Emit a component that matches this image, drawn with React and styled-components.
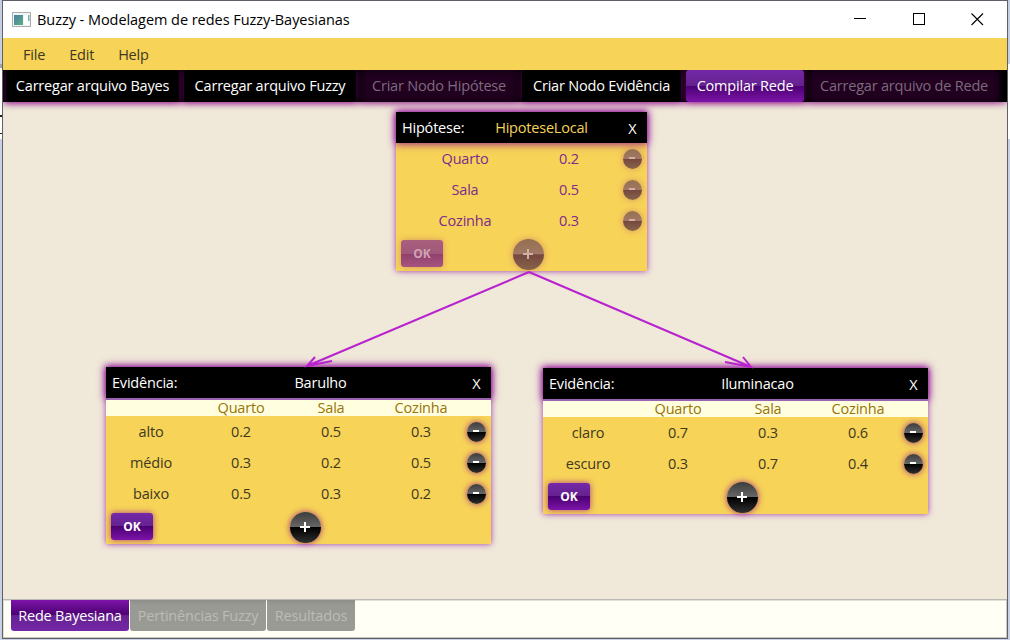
import React from "react";
import styled, { createGlobalStyle, css } from "styled-components";

const GlobalStyle = createGlobalStyle`
  * { box-sizing: border-box; }
  body { margin: 0; overflow: hidden; font-family: "Open Sans", "Noto Sans", sans-serif; }
  button { font: inherit; border: 0; margin: 0; padding: 0; }
`;

const Desktop = styled.div`
  display: flex;
  width: 1010px;
  height: 640px;
  padding: 0 2px 1px;
  background: linear-gradient(#c5cfe2 64px, #a2a5ac 64px, #a2a5ac 68px, #fff 68px, #fff 115px, #222 115px, #222 117px, #fff 117px, #fff 133px, #222 133px, #222 134px, #fff 134px, #fff 139px, #c8d2e4 139px) 0 0 / 2px 100% no-repeat,
    linear-gradient(#c5cfe2 64px, #fff 64px, #fff 139px, #c8d2e4 139px);
  font-size: 14.5px;
  line-height: 20px;
`;

const Window = styled.div`
  display: flex;
  flex-direction: column;
  width: 1006px;
  height: 639px;
  border: 1px solid #5d6167;
  background: #f0e8d9;
`;

const Label = styled.span`
  display: inline-block;
  white-space: nowrap;
  letter-spacing: ${(p) => p.$track ?? -0.2}px;
`;

const TitleBar = styled.header`
  display: flex;
  align-items: center;
  height: 37px;
  flex: none;
  padding: 0 23px 0 9px;
  background: #fff;
  color: #000;
`;

const AppIcon = styled.svg`
  margin-right: 6px;
`;

const WindowControls = styled.div`
  display: flex;
  gap: 45.5px;
  margin-left: auto;
`;

const MenuBar = styled.nav`
  display: flex;
  align-items: center;
  gap: 24px;
  height: 32px;
  flex: none;
  padding: 2px 20px 0;
  background: #f7d358;
  color: #3d3723;
`;

const ToolBar = styled.div`
  position: relative;
  z-index: 2;
  display: flex;
  gap: 5px;
  height: 32px;
  flex: none;
  padding-left: 3px;
  background: #000;
  box-shadow: 0 1px 7px rgba(140, 0, 140, 0.8);
  clip-path: inset(0 0 -12px 0);
`;

const purpleGloss = "linear-gradient(#7428a8 0%, #64218e 50%, #4b0072 50%, #7d14a8 100%)";

const ToolButton = styled.button`
  width: ${(p) => p.$w}px;
  height: 32px;
  border-radius: 3px;
  background: #000;
  color: #fff;
  box-shadow: 0 0 7px rgba(140, 0, 135, 0.65);
  ${(p) => p.$primary && css`background: ${purpleGloss};`}
  ${(p) =>
    p.disabled &&
    css`
      background: #210020;
      color: #7d6a7d;
      box-shadow: inset 0 0 7px #0b000b, 0 0 7px rgba(100, 0, 95, 0.35);
    `}
`;

const Canvas = styled.main`
  position: relative;
  height: 497px;
  flex: none;
`;

const Links = styled.svg`
  position: absolute;
  inset: 0;
  z-index: 1;
`;

const Node = styled.section`
  position: absolute;
  left: ${(p) => p.$x}px;
  top: ${(p) => p.$y}px;
  width: ${(p) => p.$w}px;
  background: #f7d358;
  color: #40391f;
  box-shadow: 0 0 6px rgba(150, 40, 165, 0.9);
`;

const NodeHeader = styled.div`
  display: grid;
  grid-template-columns: ${(p) => p.$cols};
  align-items: center;
  justify-items: center;
  height: 31px;
  background: #000;
  color: #fff;
  box-shadow: 0 0 8px 1px rgba(140, 0, 145, 0.85);
`;

const Kind = styled.div`
  justify-self: start;
  padding-left: 6px;
`;

const NodeTitle = styled.div`
  color: ${(p) => (p.$gold ? "#f7d358" : "#fff")};
`;

const CloseMark = styled.div`
  padding-top: 3px;
`;

const ColumnHeads = styled.div`
  position: relative;
  display: grid;
  grid-template-columns: 90px 90px 90px 90px 1fr;
  justify-items: center;
  align-items: center;
  height: 18px;
  border-top: 2px solid #9b62b2;
  background: #ffffdf;
  color: #987408;
  line-height: 14px;
`;

const Row = styled.div`
  display: grid;
  grid-template-columns: ${(p) => p.$cols};
  align-items: center;
  justify-items: center;
  height: 31px;
  color: ${(p) => (p.$purple ? "#7c2b8c" : "inherit")};
`;

const RoundButton = styled.button`
  display: flex;
  align-items: center;
  justify-content: center;
  width: ${(p) => p.$size}px;
  height: ${(p) => p.$size + (p.$size < 25 ? 1 : 0)}px;
  padding: 0 1px 1px 0;
  border-radius: 50%;
  background: linear-gradient(#3c3c3c 0%, #666 48%, #000 50%, #303030 100%);
  color: #fff;
  box-shadow: 0 0 6px rgba(140, 0, 140, 0.8);
  ${(p) =>
    p.disabled &&
    css`
      background: linear-gradient(#94704f 0%, #a27864 48%, #75483f 51%, #87644a 100%);
      color: #cfb0a5;
      box-shadow: 0 0 6px rgba(170, 60, 110, 0.45);
    `}
`;

const NodeFooter = styled.div`
  display: flex;
  align-items: flex-start;
  height: ${(p) => p.$h}px;
  padding: ${(p) => p.$h - 32}px 0 0 5px;
`;

const OkButton = styled.button`
  width: 42px;
  height: 27px;
  margin: 1px ${(p) => p.$gap}px 0 0;
  border-radius: 3px;
  background: ${purpleGloss};
  color: #fff;
  font-size: 12px;
  font-weight: 700;
  box-shadow: 0 0 6px rgba(140, 0, 140, 0.7);
  ${(p) =>
    p.disabled &&
    css`
      background: linear-gradient(#a95f7d 0%, #a0587a 50%, #903f6c 50%, #a5557f 100%);
      color: #d0a3b4;
      box-shadow: 0 0 6px rgba(170, 60, 110, 0.4);
    `}
`;

const TabBar = styled.footer`
  display: flex;
  gap: 1px;
  flex: 1;
  padding-left: 8px;
  border: solid #b9b9b1;
  border-width: 1px 0 0;
  background: #fffff6;
  box-shadow: inset -1px -1px 0 #c8c8c0, inset 1px 1px 0 #e0e0d7;
`;

const Tab = styled.button`
  width: ${(p) => p.$w}px;
  height: 31px;
  border-radius: 0 0 3px 3px;
  background: ${(p) =>
    p.$active
      ? "linear-gradient(#7d14a8 0%, #4b0072 49%, #64218e 49%, #7428a8 100%)"
      : "linear-gradient(#8d8e89, #999a94 5px)"};
  color: ${(p) => (p.$active ? "#fff" : "#bcbcb6")};
`;

const tools = [
  { text: "Carregar arquivo Bayes", w: 173 },
  { text: "Carregar arquivo Fuzzy", w: 172 },
  { text: "Criar Nodo Hipótese", w: 156, disabled: true },
  { text: "Criar Nodo Evidência", w: 159 },
  { text: "Compilar Rede", w: 118, primary: true },
  { text: "Carregar arquivo de Rede", w: 190, disabled: true },
];

const evidences = [
  {
    title: "Barulho", x: 103, y: 265,
    rows: [["alto", "0.2", "0.5", "0.3"], ["médio", "0.3", "0.2", "0.5"], ["baixo", "0.5", "0.3", "0.2"]],
  },
  {
    title: "Iluminacao", x: 540, y: 266,
    rows: [["claro", "0.7", "0.3", "0.6"], ["escuro", "0.3", "0.7", "0.4"]],
  },
];

const EVIDENCE_COLS = "90px 90px 90px 90px 20px";
const HYPOTHESIS_COLS = "138px 70px 56px";

function RoundIcon({ size, plus, disabled }) {
  return (
    <RoundButton $size={size} disabled={disabled}>
      <svg width="10" height="10" viewBox="0 0 10 10" stroke="currentColor" strokeWidth="2">
        <path d={plus ? "M0 5H10M5 0V10" : "M2 5H8"} />
      </svg>
    </RoundButton>
  );
}

function Evidence({ title, x, y, rows }) {
  return (
    <Node $x={x} $y={y} $w={385}>
      <NodeHeader $cols="90px 249px 63px">
        <Kind><Label>Evidência:</Label></Kind>
        <NodeTitle><Label>{title}</Label></NodeTitle>
        <CloseMark>X</CloseMark>
      </NodeHeader>
      <ColumnHeads>
        <span />
        <Label>Quarto</Label>
        <Label>Sala</Label>
        <Label>Cozinha</Label>
      </ColumnHeads>
      {rows.map((row) => (
        <Row key={row[0]} $cols={EVIDENCE_COLS}>
          {row.map((cell, i) => <Label key={i}>{cell}</Label>)}
          <RoundIcon size={19} />
        </Row>
      ))}
      <NodeFooter $h={35}>
        <OkButton $gap={137}>OK</OkButton>
        <RoundIcon size={31} plus />
      </NodeFooter>
    </Node>
  );
}

export default function App() {
  return (
    <Desktop>
      <GlobalStyle />
      <Window>
        <TitleBar>
          <AppIcon width="19" height="15" viewBox="0 0 19 15">
            <defs>
              <linearGradient id="screen" x1="0" y1="0" x2="1" y2="1">
                <stop offset="0" stopColor="#4a7fa8" />
                <stop offset="1" stopColor="#5cae82" />
              </linearGradient>
            </defs>
            <rect x=".5" y=".5" width="18" height="14" fill="#f4f5f5" stroke="#a9adb1" />
            <rect x="2" y="3" width="9" height="10" fill="url(#screen)" />
            <rect x="12" y="3" width="5" height="10" fill="#fff" />
            <rect x="16" y="3" width="1.5" height="6" fill="#7fb0a4" />
          </AppIcon>
          <Label $track={-0.05}>Buzzy - Modelagem de redes Fuzzy-Bayesianas</Label>
          <WindowControls>
            <svg width="13" height="13"><path d="M0 5.5H12" stroke="#000" /></svg>
            <svg width="13" height="13"><rect x=".5" y=".5" width="11" height="11" fill="none" stroke="#000" /></svg>
            <svg width="13" height="13"><path d="M.5 .5L12 12M12 .5L.5 12" stroke="#000" strokeWidth="1.1" /></svg>
          </WindowControls>
        </TitleBar>
        <MenuBar>
          <Label>File</Label>
          <Label>Edit</Label>
          <Label>Help</Label>
        </MenuBar>
        <ToolBar>
          {tools.map((t) => (
            <ToolButton key={t.text} $w={t.w} $primary={t.primary} disabled={t.disabled}>
              <Label>{t.text}</Label>
            </ToolButton>
          ))}
        </ToolBar>
        <Canvas>
          <Node $x={393} $y={10} $w={251}>
            <NodeHeader $cols="81px 129px 53px">
              <Kind><Label>Hipótese:</Label></Kind>
              <NodeTitle $gold><Label>HipoteseLocal</Label></NodeTitle>
              <CloseMark>X</CloseMark>
            </NodeHeader>
            {[["Quarto", "0.2"], ["Sala", "0.5"], ["Cozinha", "0.3"]].map(([name, value]) => (
              <Row key={name} $cols={HYPOTHESIS_COLS} $purple>
                <Label>{name}</Label>
                <Label>{value}</Label>
                <RoundIcon size={19} disabled />
              </Row>
            ))}
            <NodeFooter $h={35}>
              <OkButton $gap={70} disabled>OK</OkButton>
              <RoundIcon size={31} plus disabled />
            </NodeFooter>
          </Node>
          {evidences.map((e) => <Evidence key={e.title} {...e} />)}
          <Links width="1004" height="497" fill="none" stroke="#b822cf" strokeWidth="2">
            <path d="M526 170L304 264M312 255L304 264L329 259" />
            <path d="M526 170L748 265M740 255L748 265L722 260" />
          </Links>
        </Canvas>
        <TabBar>
          <Tab $w={118} $active><Label>Rede Bayesiana</Label></Tab>
          <Tab $w={136}><Label>Pertinências Fuzzy</Label></Tab>
          <Tab $w={88}><Label>Resultados</Label></Tab>
        </TabBar>
      </Window>
    </Desktop>
  );
}
